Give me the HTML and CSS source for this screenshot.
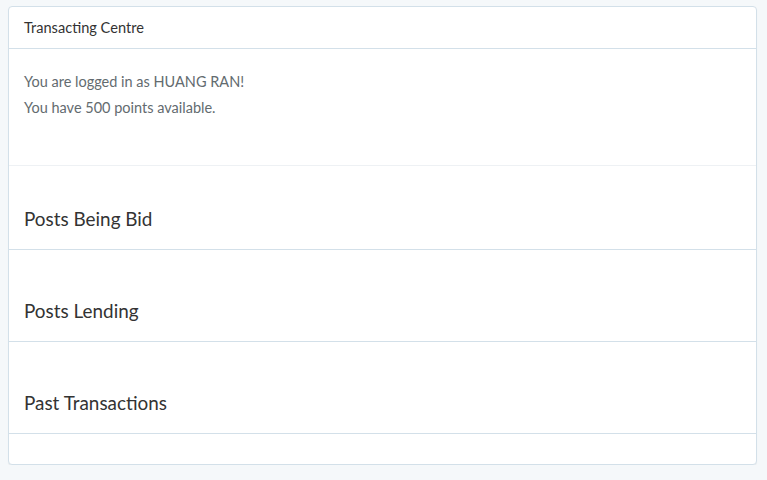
FILE: index.html
```html
<!DOCTYPE html>
<html>
<head>
<meta charset="utf-8">
<link rel="stylesheet" href="styles.css">
</head>
<body>
<div class="panel">
  <div class="panel-heading">Transacting Centre</div>
  <div class="panel-body">
    <p class="line">You are logged in as HUANG RAN!</p>
    <p class="line">You have 500 points available.</p>
  </div>
  <div class="section first"><h3>Posts Being Bid</h3></div>
  <div class="section"><h3>Posts Lending</h3></div>
  <div class="section"><h3>Past Transactions</h3></div>
  <div class="panel-foot"></div>
</div>
</body>
</html>
```
FILE: styles.css
```css
html, body { margin: 0; padding: 0; }
body {
  background: #f5f8fa;
  font-family: Lato, "Open Sans", sans-serif;
  color: #636b6f;
  font-size: 14.5px;
  padding: 6px 10px 0 8px;
}
.panel {
  background: #fff;
  border: 1px solid #d3e0e9;
  border-radius: 4px;
  box-shadow: 0 1px 1px rgba(0,0,0,0.05);
  display: flex;
  flex-direction: column;
}
.panel-heading {
  height: 42px;
  box-sizing: border-box;
  padding: 0 15px;
  display: flex;
  align-items: center;
  color: #333;
  border-bottom: 1px solid #d3e0e9;
  font-size: 14.6px;
}
.panel-body {
  padding: 20px 15px 0;
  height: 117px;
  box-sizing: border-box;
  border-bottom: 1px solid #eef1f4;
}
.line { margin: 0; line-height: 26px; height: 26px; }
.section {
  height: 92px;
  box-sizing: border-box;
  border-bottom: 1px solid #d3e0e9;
  padding: 0 15px;
  display: flex;
  align-items: flex-end;
}
.section.first { height: 84px; }
.section h3 {
  margin: 0 0 19px;
  font-size: 18.9px;
  font-weight: 400;
  color: #333;
  line-height: 22px;
}
.panel-foot { height: 30px; }
```
